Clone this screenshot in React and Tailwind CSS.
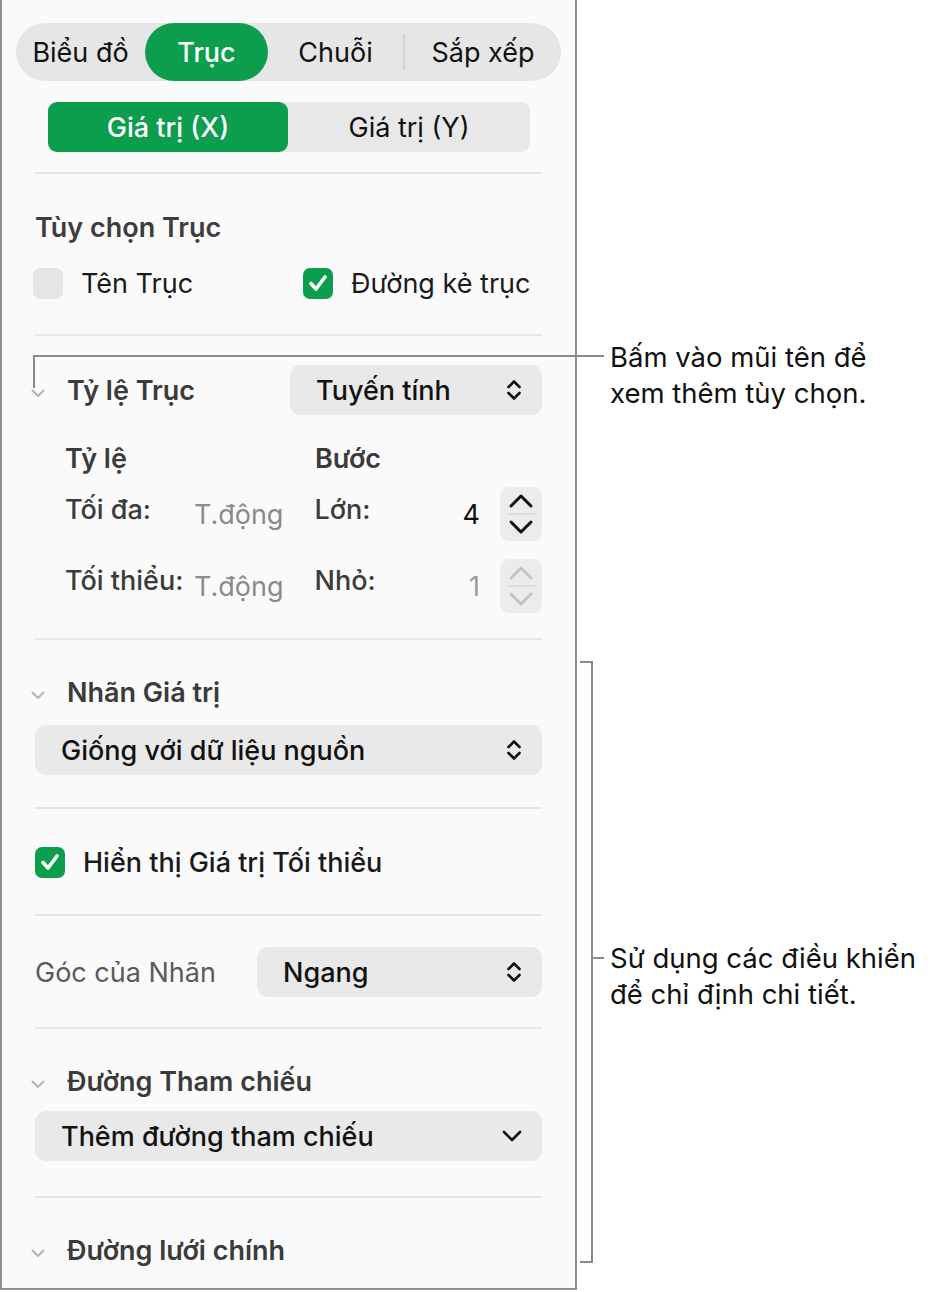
import React from "react";

// Small drawings used across the inspector
function Disclosure() {
  return (
    <svg width="14" height="9" viewBox="0 0 14 9" className="shrink-0">
      <path d="M1.5 1.5 L7 7 L12.5 1.5" fill="none" stroke="#b4b4b4" strokeWidth="2" strokeLinecap="round" strokeLinejoin="round" />
    </svg>
  );
}

function UpDown() {
  return (
    <svg width="16" height="24" viewBox="0 0 16 24" className="shrink-0">
      <path d="M2.5 9 L8 3.5 L13.5 9" fill="none" stroke="#111" strokeWidth="2.6" strokeLinecap="round" strokeLinejoin="round" />
      <path d="M2.5 15 L8 20.5 L13.5 15" fill="none" stroke="#111" strokeWidth="2.6" strokeLinecap="round" strokeLinejoin="round" />
    </svg>
  );
}

function ChevronDown() {
  return (
    <svg width="20" height="12" viewBox="0 0 20 12" className="shrink-0">
      <path d="M2 2 L10 10 L18 2" fill="none" stroke="#111" strokeWidth="2.6" strokeLinecap="round" strokeLinejoin="round" />
    </svg>
  );
}

function Check() {
  return (
    <svg width="20" height="18" viewBox="0 0 20 18">
      <path d="M3 9.5 L8 15 L17 3" fill="none" stroke="#fff" strokeWidth="3.6" strokeLinecap="round" strokeLinejoin="round" />
    </svg>
  );
}

function Box({ checked }) {
  return checked ? (
    <div className="w-[30px] h-[31px] rounded-[7px] bg-[#0d9e4d] flex items-center justify-center shrink-0">
      <Check />
    </div>
  ) : (
    <div className="w-[30px] h-[31px] rounded-[7px] bg-[#e6e6e6] shrink-0" />
  );
}

function Stepper({ disabled }) {
  const c = disabled ? "#c4c4c4" : "#111";
  return (
    <div className="w-[42px] h-[54px] rounded-[9px] bg-[#ececec] flex flex-col items-center justify-between py-[6px] shrink-0">
      <svg width="26" height="16" viewBox="0 0 26 16">
        <path d="M3 13 L13 3 L23 13" fill="none" stroke={c} strokeWidth="3" strokeLinecap="round" strokeLinejoin="round" />
      </svg>
      <div className="w-[28px] h-[2px] bg-[#dcdcdc]" />
      <svg width="26" height="16" viewBox="0 0 26 16">
        <path d="M3 3 L13 13 L23 3" fill="none" stroke={c} strokeWidth="3" strokeLinecap="round" strokeLinejoin="round" />
      </svg>
    </div>
  );
}

function Divider() {
  return <div className="h-[2px] bg-[#e6e6e6]" />;
}

function SectionHeader({ children }) {
  return (
    <div className="flex items-center h-[32px]">
      <div className="w-[36px] flex pt-[6px] -ml-[4px]">
        <Disclosure />
      </div>
      <span className="font-semibold text-[#3b3b3b]">{children}</span>
    </div>
  );
}

function Select({ children, arrow = "updown", className = "" }) {
  return (
    <div className={`h-[50px] rounded-[11px] bg-[#e9e9e9] flex items-center justify-between pl-[26px] pr-[20px] ${className}`}>
      <span className="text-[#111] font-medium">{children}</span>
      {arrow === "updown" ? <UpDown /> : <ChevronDown />}
    </div>
  );
}

export default function App() {
  return (
    <div className="relative w-[943px] h-[1292px] bg-white font-[Inter,sans-serif] text-[27px] leading-none overflow-hidden">
      <div className="w-[577px] h-[1290px] bg-[#fafafa] border-x-2 border-b-2 border-[#8d8d8d] overflow-hidden">
        {/* tabs */}
        <div className="px-[14px] pt-[23px]">
          <div className="h-[58px] rounded-full bg-[#e6e6e6] flex items-center text-[#111]">
            <div className="w-[129px] text-center">Biểu đồ</div>
            <div className="w-[123px] h-[58px] rounded-full bg-[#0d9e4d] text-white font-medium flex items-center justify-center">
              Trục
            </div>
            <div className="w-[135px] text-center">Chuỗi</div>
            <div className="w-[2px] h-[36px] bg-[#d2d2d2]" />
            <div className="flex-1 text-center">Sắp xếp</div>
          </div>
        </div>

        {/* X / Y segment */}
        <div className="mt-[21px] ml-[46px] w-[482px] h-[50px] rounded-[9px] bg-[#e8e8e8] flex">
          <div className="w-[240px] h-[50px] rounded-[9px] bg-[#0d9e4d] text-white font-medium flex items-center justify-center">
            Giá trị (X)
          </div>
          <div className="flex-1 flex items-center justify-center text-[#111]">Giá trị (Y)</div>
        </div>

        <div className="px-[33px]">
          <div className="mt-[20px]">
            <Divider />
          </div>

          {/* axis options */}
          <div className="mt-[37px] h-[32px] flex items-center font-semibold text-[#3d3d3d]">Tùy chọn Trục</div>
          <div className="mt-[24px] h-[32px] flex items-center">
            <div className="flex items-center gap-[18px] w-[270px] -ml-[2px]">
              <Box />
              <span className="text-[#1a1a1a]">Tên Trục</span>
            </div>
            <div className="flex items-center gap-[18px]">
              <Box checked />
              <span className="text-[#1a1a1a]">Đường kẻ trục</span>
            </div>
          </div>
          <div className="mt-[35px]">
            <Divider />
          </div>

          {/* axis scale */}
          <div className="mt-[29px] flex items-center justify-between">
            <SectionHeader>Tỷ lệ Trục</SectionHeader>
            <Select className="w-[252px]">Tuyến tính</Select>
          </div>
          <div className="mt-[27px] h-[32px] flex items-center font-semibold text-[#3b3b3b] pl-[30px]">
            <span className="w-[250px]">Tỷ lệ</span>
            <span>Bước</span>
          </div>
          <div className="mt-[13px] flex items-center pl-[30px]">
            <span className="w-[100px] text-[#3b3b3b] font-medium -mt-[10px]">Tối đa:</span>
            <span className="w-[119px] text-right text-[#8a8a8a]">T.động</span>
            <span className="ml-[31px] w-[60px] text-[#3b3b3b] font-medium -mt-[10px]">Lớn:</span>
            <span className="w-[106px] text-right text-[#111]">4</span>
            <div className="ml-[20px]">
              <Stepper />
            </div>
          </div>
          <div className="mt-[18px] flex items-center pl-[30px]">
            <span className="w-[100px] text-[#3b3b3b] font-medium -mt-[12px] whitespace-nowrap">Tối thiểu:</span>
            <span className="w-[119px] text-right text-[#8a8a8a]">T.động</span>
            <span className="ml-[31px] w-[60px] text-[#3b3b3b] font-medium -mt-[12px]">Nhỏ:</span>
            <span className="w-[106px] text-right text-[#9a9a9a]">1</span>
            <div className="ml-[20px]">
              <Stepper disabled />
            </div>
          </div>
          <div className="mt-[25px]">
            <Divider />
          </div>

          {/* value labels */}
          <div className="mt-[36px]">
            <SectionHeader>Nhãn Giá trị</SectionHeader>
          </div>
          <Select className="mt-[17px]">Giống với dữ liệu nguồn</Select>
          <div className="mt-[32px]">
            <Divider />
          </div>

          <div className="mt-[37px] h-[32px] flex items-center gap-[18px]">
            <Box checked />
            <span className="text-[#1a1a1a] font-medium">Hiển thị Giá trị Tối thiểu</span>
          </div>
          <div className="mt-[36px]">
            <Divider />
          </div>

          <div className="mt-[31px] flex items-center justify-between">
            <span className="text-[#5a5a5a]">Góc của Nhãn</span>
            <Select className="w-[285px]">Ngang</Select>
          </div>
          <div className="mt-[30px]">
            <Divider />
          </div>

          {/* reference lines */}
          <div className="mt-[36px]">
            <SectionHeader>Đường Tham chiếu</SectionHeader>
          </div>
          <Select className="mt-[14px]" arrow="down">Thêm đường tham chiếu</Select>
          <div className="mt-[35px]">
            <Divider />
          </div>

          <div className="mt-[36px]">
            <SectionHeader>Đường lưới chính</SectionHeader>
          </div>
        </div>
      </div>

      {/* callout: disclosure arrow */}
      <div className="absolute left-[33px] top-[355px] w-[571px] h-[2px] bg-[#8a8a8a]" />
      <div className="absolute left-[33px] top-[355px] w-[2px] h-[33px] bg-[#8a8a8a]" />
      <div className="absolute left-[610px] top-[339px] text-[27.5px] text-[#111] leading-[36px]">
        <div>Bấm vào mũi tên để</div>
        <div>xem thêm tùy chọn.</div>
      </div>

      {/* callout: bracket over the controls */}
      <div className="absolute left-[580px] top-[661px] w-[13px] h-[602px] border-y-2 border-r-2 border-[#8a8a8a]" />
      <div className="absolute left-[593px] top-[957px] w-[11px] h-[2px] bg-[#8a8a8a]" />
      <div className="absolute left-[610px] top-[940px] text-[27.5px] text-[#111] leading-[36px]">
        <div>Sử dụng các điều khiển</div>
        <div>để chỉ định chi tiết.</div>
      </div>
    </div>
  );
}
